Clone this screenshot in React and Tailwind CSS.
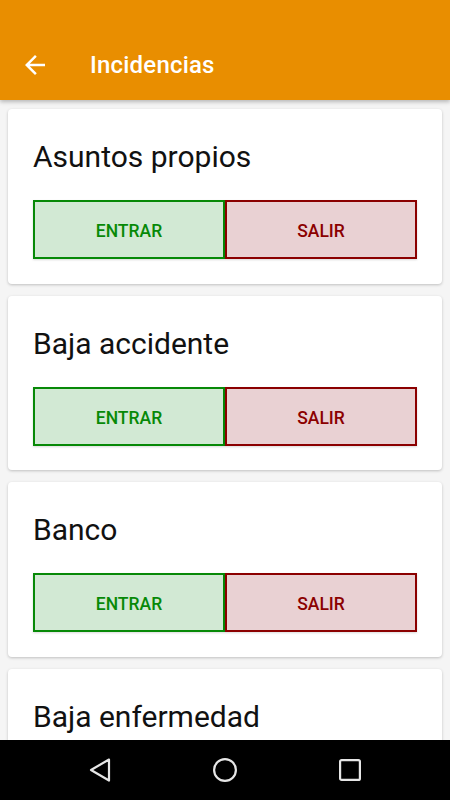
const items = [
  { title: 'Asuntos propios', actions: true },
  { title: 'Baja accidente', actions: true },
  { title: 'Banco', actions: true },
  { title: 'Baja enfermedad', actions: false },
];

function BackArrow() {
  return (
    <svg width="30" height="30" viewBox="0 0 24 24" fill="white" aria-hidden="true">
      <path d="M20 11H7.83l5.59-5.59L12 4l-8 8 8 8 1.41-1.41L7.83 13H20v-2z" />
    </svg>
  );
}

function IncidenceCard({ title, actions }) {
  return (
    <div className="mx-[8px] shrink-0 rounded-[4px] bg-white px-[25px] pt-[30px] pb-[24.7px] shadow-[0_1px_3px_rgba(0,0,0,0.22)]">
      <h2 className="text-[30px] leading-[36px] font-normal text-[#111]">{title}</h2>
      {actions && (
        <div className="mt-[25px] flex">
          <button
            type="button"
            className="flex h-[59px] flex-1 items-center justify-center border-2 border-[#078907] bg-[#d2e9d4] pt-[3px] text-[17.5px] font-medium text-[#078907] shadow-[0_1px_2px_rgba(0,0,0,0.15)]"
          >
            ENTRAR
          </button>
          <button
            type="button"
            className="flex h-[59px] flex-1 items-center justify-center border-2 border-[#8b0000] bg-[#e9d1d3] pt-[3px] text-[17.5px] font-medium text-[#8b0000] shadow-[0_1px_2px_rgba(0,0,0,0.15)]"
          >
            SALIR
          </button>
        </div>
      )}
      {!actions && <div className="h-[84px]" />}
    </div>
  );
}

export default function App() {
  return (
    <div
      className="flex h-[800px] w-[450px] flex-col overflow-hidden bg-[#f5f5f5]"
      style={{ fontFamily: 'Roboto, "Liberation Sans", sans-serif' }}
    >
      {/* barra superior */}
      <header className="z-10 h-[100px] shrink-0 bg-[#e98e00] pt-[41px] shadow-[0_2px_4px_rgba(0,0,0,0.25)]">
        <div className="flex h-[48px] items-center">
          <div className="ml-[20px] flex h-[30px] w-[30px] items-center justify-center">
            <BackArrow />
          </div>
          <h1 className="ml-[40px] text-[24px] leading-[28px] font-medium tracking-[0.2px] text-white">Incidencias</h1>
        </div>
      </header>

      <main className="flex flex-1 flex-col gap-[12px] overflow-hidden pt-[9px]">
        {items.map((item) => (
          <IncidenceCard key={item.title} title={item.title} actions={item.actions} />
        ))}
      </main>

      {/* navegación del sistema */}
      <nav className="flex h-[60px] shrink-0 items-center justify-center bg-black">
        <div className="flex w-[125px] justify-center">
          <svg width="24" height="28" viewBox="0 0 24 28" fill="none" stroke="#e6e6e6" strokeWidth="2.2" strokeLinejoin="round">
            <path d="M21 3.5 L3 14 L21 24.5 Z" />
          </svg>
        </div>
        <div className="flex w-[125px] justify-center">
          <svg width="26" height="26" viewBox="0 0 26 26" fill="none" stroke="#e6e6e6" strokeWidth="2.2">
            <circle cx="13" cy="13" r="10.9" />
          </svg>
        </div>
        <div className="flex w-[125px] justify-center">
          <svg width="24" height="24" viewBox="0 0 24 24" fill="none" stroke="#e6e6e6" strokeWidth="2.2">
            <rect x="2.1" y="2.1" width="19.8" height="19.8" rx="1.5" />
          </svg>
        </div>
      </nav>
    </div>
  );
}
